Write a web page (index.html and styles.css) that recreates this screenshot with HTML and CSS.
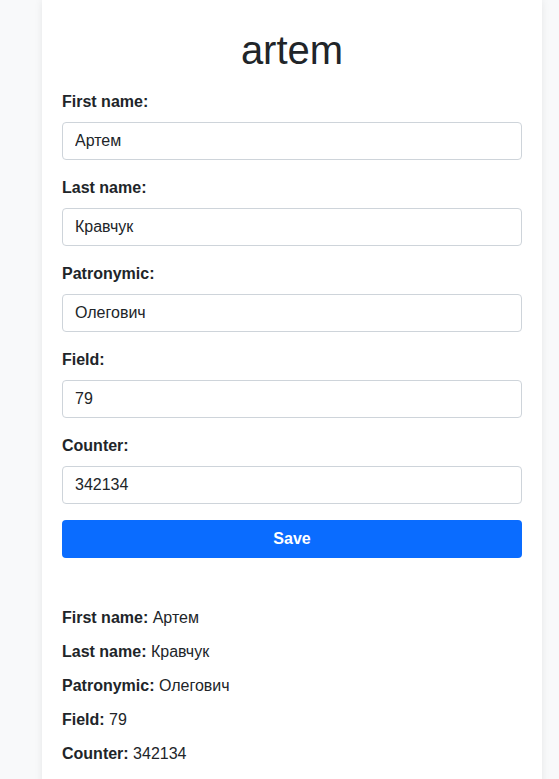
FILE: index.html
```html
<!DOCTYPE html>
<html>
<head>
<meta charset="utf-8">
<link rel="stylesheet" href="styles.css">
</head>
<body>
<div class="card">
  <h1 class="title">artem</h1>
  <form class="form">
    <div class="group">
      <label class="label">First name:</label>
      <input class="input" type="text" value="Артем">
    </div>
    <div class="group">
      <label class="label">Last name:</label>
      <input class="input" type="text" value="Кравчук">
    </div>
    <div class="group">
      <label class="label">Patronymic:</label>
      <input class="input" type="text" value="Олегович">
    </div>
    <div class="group">
      <label class="label">Field:</label>
      <input class="input" type="text" value="79">
    </div>
    <div class="group">
      <label class="label">Counter:</label>
      <input class="input" type="text" value="342134">
    </div>
    <button class="btn" type="button">Save</button>
  </form>
  <div class="info">
    <p class="row"><b>First name:</b> Артем</p>
    <p class="row"><b>Last name:</b> Кравчук</p>
    <p class="row"><b>Patronymic:</b> Олегович</p>
    <p class="row"><b>Field:</b> 79</p>
    <p class="row"><b>Counter:</b> 342134</p>
  </div>
</div>
</body>
</html>
```

FILE: styles.css
```css
html, body {
  margin: 0;
  padding: 0;
  background: #f8f9fa;
  font-family: "Liberation Sans", Arial, sans-serif;
  color: #212529;
  font-size: 16px;
  line-height: 24px;
}
.card {
  width: 460px;
  margin: 0 0 0 42px;
  background: #fff;
  padding: 26px 20px 20px;
  box-shadow: 0 0 8px rgba(0,0,0,0.08);
  min-height: 760px;
}
.title {
  margin: 0 0 16px;
  font-size: 40px;
  line-height: 48px;
  font-weight: 400;
  text-align: center;
}
.form {
  display: flex;
  flex-direction: column;
}
.group {
  display: flex;
  flex-direction: column;
  margin-bottom: 16px;
}
.label {
  font-weight: 700;
  margin-bottom: 8px;
}
.input {
  box-sizing: border-box;
  height: 38px;
  width: 100%;
  border: 1px solid #ced4da;
  border-radius: 4px;
  padding: 6px 12px;
  font: 16px/24px "Liberation Sans", Arial, sans-serif;
  color: #212529;
  background: #fff;
  margin: 0;
}
.btn {
  height: 38px;
  width: 100%;
  border: none;
  border-radius: 4px;
  background: #0a6cff;
  color: #fff;
  font: 700 16px/24px "Liberation Sans", Arial, sans-serif;
  cursor: pointer;
  margin: 0;
}
.info {
  margin-top: 48px;
}
.row {
  margin: 0 0 10px;
}
.row b {
  font-weight: 700;
}
```
